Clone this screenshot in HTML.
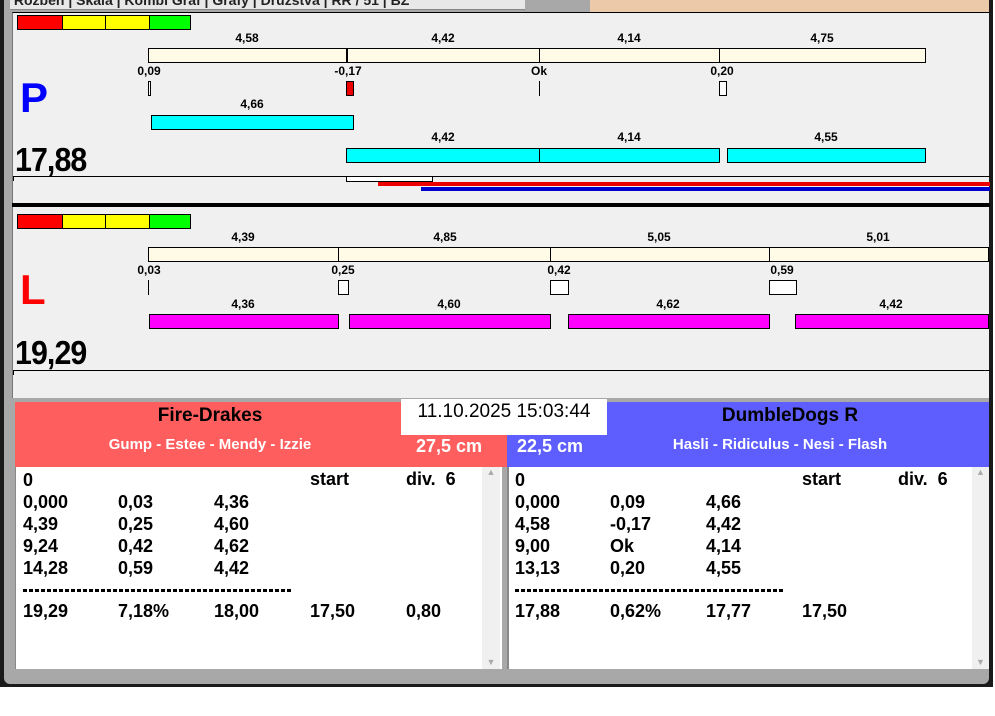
<!DOCTYPE html>
<html><head><style>
*{margin:0;padding:0;box-sizing:border-box}
body{width:995px;height:716px;background:#fff;position:relative;overflow:hidden;font-family:"Liberation Sans",Arial,sans-serif;font-weight:bold;color:#000}
.a{position:absolute}
.t{position:absolute;font-size:12px;transform:translateX(-50%);white-space:nowrap}
.bar{position:absolute;border:1px solid #000}
.lst{position:absolute;font-size:18px;white-space:nowrap}
.big{position:absolute;font-size:33px;transform:scaleX(0.92);transform-origin:left top;letter-spacing:-1px}
</style></head><body>
<div class="a" style="left:0;top:0;width:993px;height:687px;background:#1a1a1a"></div>
<div class="a" style="left:4px;top:0;width:985px;height:684px;background:#a8a8a8;border-radius:0 0 6px 6px"></div>
<div class="a" style="left:590px;top:0;width:399px;height:12px;background:#ecc9a8"></div>
<div class="a" style="left:10px;top:0;width:515px;height:10px;background:#e8e8e8;border-bottom:1px solid #888"></div>
<div class="a" style="left:10px;top:0;width:515px;height:10px;font-size:14px;line-height:0px;color:#222;font-weight:bold;overflow:hidden">&nbsp;Rozbeh | Skala | Kombi Graf | Grafy | Druzstva | RR / 51 | BZ</div>
<div class="a" style="left:12px;top:12px;width:977px;height:386px;background:#f0f0f0;border-top:1px solid #000;border-left:1px solid #777"></div>
<div class="a" style="left:17px;top:15px;width:174px;height:15px;border:1px solid #000;background:linear-gradient(90deg,#f00 0 44px,#000 44px 45px,#ff0 45px 87px,#000 87px 88px,#ff0 88px 131px,#000 131px 132px,#0f0 132px)"></div>
<div class="t" style="left:247px;top:31px">4,58</div>
<div class="t" style="left:443px;top:31px">4,42</div>
<div class="t" style="left:629px;top:31px">4,14</div>
<div class="t" style="left:822px;top:31px">4,75</div>
<div class="bar" style="left:148px;top:48px;width:778px;height:15px;background:#fffbe6"></div>
<div class="a" style="left:346px;top:48px;width:2px;height:15px;background:#000"></div>
<div class="a" style="left:539px;top:48px;width:1px;height:15px;background:#000"></div>
<div class="a" style="left:719px;top:48px;width:1px;height:15px;background:#000"></div>
<div class="t" style="left:149px;top:64px">0,09</div>
<div class="t" style="left:348px;top:64px">-0,17</div>
<div class="t" style="left:539px;top:64px">Ok</div>
<div class="t" style="left:722px;top:64px">0,20</div>
<div class="bar" style="left:148px;top:81px;width:3px;height:15px;background:#fff"></div>
<div class="bar" style="left:346px;top:81px;width:8px;height:15px;background:#e00"></div>
<div class="a" style="left:539px;top:81px;width:1px;height:15px;background:#000"></div>
<div class="bar" style="left:719px;top:81px;width:8px;height:15px;background:#fff"></div>
<div class="a" style="left:20px;top:74px;font-size:42px;color:#00f">P</div>
<div class="t" style="left:252px;top:97px">4,66</div>
<div class="bar" style="left:151px;top:115px;width:203px;height:15px;background:#0ff"></div>
<div class="t" style="left:443px;top:130px">4,42</div>
<div class="t" style="left:629px;top:130px">4,14</div>
<div class="t" style="left:826px;top:130px">4,55</div>
<div class="bar" style="left:346px;top:148px;width:374px;height:15px;background:#0ff"></div>
<div class="a" style="left:539px;top:148px;width:1px;height:15px;background:#000"></div>
<div class="bar" style="left:727px;top:148px;width:199px;height:15px;background:#0ff"></div>
<div class="big" style="left:15px;top:141px">17,88</div>
<div class="a" style="left:13px;top:176px;width:977px;height:1px;background:#000"></div>
<div class="a" style="left:13px;top:176px;width:1px;height:5px;background:#000"></div>
<div class="bar" style="left:346px;top:176px;width:87px;height:6px;background:#fff"></div>
<div class="a" style="left:378px;top:182px;width:612px;height:4px;background:#e00"></div>
<div class="a" style="left:421px;top:187px;width:569px;height:4px;background:#00c"></div>
<div class="a" style="left:12px;top:203px;width:978px;height:4px;background:#000"></div>
<div class="a" style="left:17px;top:214px;width:174px;height:15px;border:1px solid #000;background:linear-gradient(90deg,#f00 0 44px,#000 44px 45px,#ff0 45px 87px,#000 87px 88px,#ff0 88px 131px,#000 131px 132px,#0f0 132px)"></div>
<div class="t" style="left:243px;top:230px">4,39</div>
<div class="t" style="left:445px;top:230px">4,85</div>
<div class="t" style="left:659px;top:230px">5,05</div>
<div class="t" style="left:878px;top:230px">5,01</div>
<div class="bar" style="left:148px;top:247px;width:841px;height:15px;background:#fffbe6"></div>
<div class="a" style="left:338px;top:247px;width:1px;height:15px;background:#000"></div>
<div class="a" style="left:550px;top:247px;width:1px;height:15px;background:#000"></div>
<div class="a" style="left:769px;top:247px;width:1px;height:15px;background:#000"></div>
<div class="t" style="left:149px;top:263px">0,03</div>
<div class="t" style="left:343px;top:263px">0,25</div>
<div class="t" style="left:559px;top:263px">0,42</div>
<div class="t" style="left:782px;top:263px">0,59</div>
<div class="a" style="left:148px;top:280px;width:1px;height:15px;background:#000"></div>
<div class="bar" style="left:338px;top:280px;width:11px;height:15px;background:#fff"></div>
<div class="bar" style="left:550px;top:280px;width:19px;height:15px;background:#fff"></div>
<div class="bar" style="left:769px;top:280px;width:28px;height:15px;background:#fff"></div>
<div class="a" style="left:20px;top:266px;font-size:42px;color:#f00">L</div>
<div class="t" style="left:243px;top:297px">4,36</div>
<div class="t" style="left:449px;top:297px">4,60</div>
<div class="t" style="left:668px;top:297px">4,62</div>
<div class="t" style="left:891px;top:297px">4,42</div>
<div class="bar" style="left:149px;top:314px;width:190px;height:15px;background:#f0f"></div>
<div class="bar" style="left:349px;top:314px;width:202px;height:15px;background:#f0f"></div>
<div class="bar" style="left:568px;top:314px;width:202px;height:15px;background:#f0f"></div>
<div class="bar" style="left:795px;top:314px;width:194px;height:15px;background:#f0f"></div>
<div class="big" style="left:15px;top:334px">19,29</div>
<div class="a" style="left:13px;top:370px;width:977px;height:1px;background:#000"></div>
<div class="a" style="left:13px;top:370px;width:1px;height:5px;background:#000"></div>
<div class="a" style="left:15px;top:402px;width:492px;height:65px;background:#ff5e5e"></div>
<div class="a" style="left:507px;top:402px;width:482px;height:65px;background:#5e5eff"></div>
<div class="a" style="left:15px;top:405px;width:390px;text-align:center;font-size:19px">Fire-Drakes</div>
<div class="a" style="left:15px;top:436px;width:390px;text-align:center;font-size:15px;color:#fff">Gump - Estee - Mendy - Izzie</div>
<div class="a" style="left:416px;top:436px;font-size:18px;color:#fff">27,5 cm</div>
<div class="a" style="left:517px;top:436px;font-size:18px;color:#fff">22,5 cm</div>
<div class="a" style="left:610px;top:405px;width:360px;text-align:center;font-size:19px">DumbleDogs R</div>
<div class="a" style="left:610px;top:436px;width:340px;text-align:center;font-size:15px;color:#fff">Hasli - Ridiculus - Nesi - Flash</div>
<div class="a" style="left:401px;top:399px;width:206px;height:36px;background:#fff;font-weight:normal;font-size:19px;text-align:center;padding-top:2px">11.10.2025 15:03:44</div>
<div class="a" style="left:15px;top:467px;width:487px;height:202px;background:#fff;border-left:1px solid #888"></div>
<div class="a" style="left:482px;top:467px;width:18px;height:202px;background:#f0f0f0;font-size:9px;color:#aaa;text-align:center">▲<div style="position:absolute;bottom:2px;width:18px">▼</div></div>
<div class="a" style="left:507px;top:467px;width:482px;height:202px;background:#fff;border-left:2px solid #888"></div>
<div class="a" style="left:972px;top:467px;width:17px;height:202px;background:#f0f0f0;font-size:9px;color:#aaa;text-align:center">▲<div style="position:absolute;bottom:2px;width:17px">▼</div></div>
<div class="lst" style="left:23px;top:469px;line-height:22px">0<br>0,000<br>4,39<br>9,24<br>14,28</div>
<div class="lst" style="left:118px;top:491px;line-height:22px">0,03<br>0,25<br>0,42<br>0,59</div>
<div class="lst" style="left:214px;top:491px;line-height:22px">4,36<br>4,60<br>4,62<br>4,42</div>
<div class="lst" style="left:310px;top:469px">start</div>
<div class="lst" style="left:406px;top:469px">div.&nbsp; 6</div>
<div class="a" style="left:23px;top:589px;width:270px;height:3px;background:repeating-linear-gradient(90deg,#000 0 4px,transparent 4px 6px)"></div>
<div class="lst" style="left:23px;top:601px">19,29</div>
<div class="lst" style="left:118px;top:601px">7,18%</div>
<div class="lst" style="left:214px;top:601px">18,00</div>
<div class="lst" style="left:310px;top:601px">17,50</div>
<div class="lst" style="left:406px;top:601px">0,80</div>
<div class="lst" style="left:515px;top:469px;line-height:22px">0<br>0,000<br>4,58<br>9,00<br>13,13</div>
<div class="lst" style="left:610px;top:491px;line-height:22px">0,09<br>-0,17<br>Ok<br>0,20</div>
<div class="lst" style="left:706px;top:491px;line-height:22px">4,66<br>4,42<br>4,14<br>4,55</div>
<div class="lst" style="left:802px;top:469px">start</div>
<div class="lst" style="left:898px;top:469px">div.&nbsp; 6</div>
<div class="a" style="left:515px;top:589px;width:270px;height:3px;background:repeating-linear-gradient(90deg,#000 0 4px,transparent 4px 6px)"></div>
<div class="lst" style="left:515px;top:601px">17,88</div>
<div class="lst" style="left:610px;top:601px">0,62%</div>
<div class="lst" style="left:706px;top:601px">17,77</div>
<div class="lst" style="left:802px;top:601px">17,50</div>
</body></html>
